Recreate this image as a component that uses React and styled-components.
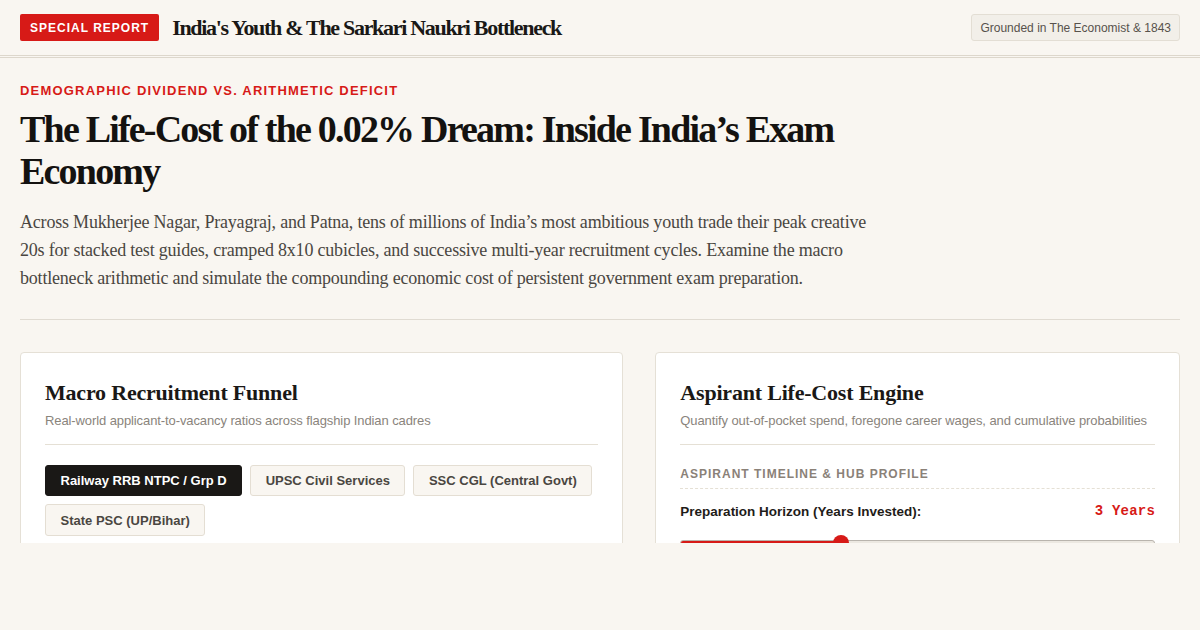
import React, { useState } from "react";
import styled, { createGlobalStyle } from "styled-components";

const GlobalStyle = createGlobalStyle`
  html, body { margin: 0; padding: 0; background: #f9f6f1; }
  * { box-sizing: border-box; }
`;

const serif = `"Liberation Serif", "Times New Roman", serif`;
const sans = `"Liberation Sans", Arial, sans-serif`;
const mono = `"Liberation Mono", "Courier New", monospace`;

const Page = styled.div`
  height: 543px;
  overflow: hidden;
  background: #f9f6f1;
  color: #1a1816;
  font-family: ${sans};
`;

const TopBar = styled.header`
  height: 58px;
  padding: 0 20px;
  display: flex;
  align-items: center;
  justify-content: space-between;
  border-bottom: 3px double #ddd7cc;
`;

const Brand = styled.div`
  display: flex;
  align-items: center;
  gap: 13px;
`;

const Badge = styled.span`
  background: #d71a17;
  color: #fff;
  font-family: ${sans};
  font-weight: 700;
  font-size: 12px;
  letter-spacing: 1px;
  padding: 0 10px;
  height: 27px;
  display: inline-flex;
  align-items: center;
  border-radius: 2px;
`;

const BarTitle = styled.div`
  font-family: ${serif};
  font-weight: 700;
  font-size: 22px;
  letter-spacing: -1.3px;
  color: #1a1816;
`;

const SourceChip = styled.span`
  font-size: 12px;
  color: #57524c;
  background: #f2efe9;
  border: 1px solid #e3ded4;
  border-radius: 3px;
  height: 27px;
  padding: 0 8px;
  display: inline-flex;
  align-items: center;
`;

const Main = styled.main`
  padding: 0 20px;
`;

const Hero = styled.section`
  padding-top: 25px;
  padding-bottom: 27px;
  border-bottom: 1px solid #e0dbd2;
`;

const Kicker = styled.div`
  color: #d71a17;
  font-weight: 700;
  font-size: 13px;
  letter-spacing: 1.2px;
  text-transform: uppercase;
`;

const Headline = styled.h1`
  margin: 10px 0 0;
  max-width: 900px;
  font-family: ${serif};
  font-weight: 700;
  font-size: 38px;
  line-height: 42px;
  letter-spacing: -1.8px;
  color: #141210;
`;

const Lede = styled.p`
  margin: 16px 0 0;
  max-width: 860px;
  font-family: ${serif};
  font-size: 18px;
  line-height: 28px;
  letter-spacing: -0.2px;
  color: #4a4641;
`;

const Grid = styled.div`
  margin-top: 32px;
  display: grid;
  grid-template-columns: 1.15fr 1fr;
  gap: 32px;
`;

const Card = styled.section`
  background: #fff;
  border: 1px solid #e5e0d6;
  border-radius: 4px;
  padding: 26px 24px 24px;
  min-height: 300px;
`;

const CardHead = styled.div`
  padding-bottom: 16px;
  border-bottom: 1px solid #e5e0d5;
`;

const CardTitle = styled.h2`
  margin: 0;
  font-family: ${serif};
  font-weight: 700;
  font-size: 22px;
  line-height: 28px;
  letter-spacing: -0.2px;
  color: #1a1816;
`;

const CardSub = styled.div`
  margin-top: 6px;
  font-size: 13px;
  letter-spacing: -0.1px;
  white-space: nowrap;
  color: #8a847c;
`;

const Tabs = styled.div`
  margin-top: 20px;
  display: flex;
  flex-wrap: wrap;
  gap: 8px;
`;

const Tab = styled.button`
  font-family: ${sans};
  font-weight: 700;
  font-size: 13px;
  padding: 0 14.5px;
  border-radius: 3px;
  cursor: pointer;
  border: 1px solid ${(p) => (p.$active ? "#1a1816" : "#e4ded3")};
  background: ${(p) => (p.$active ? "#1a1816" : "#f9f6f1")};
  color: ${(p) => (p.$active ? "#fff" : "#4a4641")};
  height: ${(p) => (p.$tall ? "32px" : "31px")};
`;

const SectionLabel = styled.div`
  margin-top: 22px;
  padding-bottom: 7px;
  border-bottom: 1px dashed #e5e0d5;
  font-size: 12px;
  font-weight: 700;
  letter-spacing: 1px;
  color: #8a8178;
  text-transform: uppercase;
`;

const FieldRow = styled.div`
  margin-top: 14px;
  display: flex;
  align-items: center;
  justify-content: space-between;
`;

const FieldLabel = styled.label`
  font-size: 13.5px;
  font-weight: 700;
  color: #1f1c19;
`;

const FieldValue = styled.span`
  font-family: ${mono};
  font-weight: 700;
  font-size: 14px;
  letter-spacing: 0.2px;
  color: #d71a17;
`;

const SliderWrap = styled.div`
  position: relative;
  margin-top: 16px;
  height: 16px;
`;

const Track = styled.div`
  position: absolute;
  left: 0;
  right: 0;
  top: 5px;
  height: 6px;
  border-radius: 3px;
  background: #ece8e1;
  border: 1px solid #b9b4ad;
  overflow: hidden;
`;

const Fill = styled.div`
  height: 100%;
  background: #d71a17;
`;

const Thumb = styled.div`
  position: absolute;
  top: 0;
  width: 16px;
  height: 16px;
  border-radius: 50%;
  background: #d71a17;
`;

const cadres = [
  "Railway RRB NTPC / Grp D",
  "UPSC Civil Services",
  "SSC CGL (Central Govt)",
  "State PSC (UP/Bihar)",
];

export default function App() {
  const [active, setActive] = useState(0);
  const years = 3;
  const ratio = (years - 1) / (7 - 1);
  // thumb travels inside the track, inset by its own radius on each side
  const thumbLeft = `calc(${ratio} * (100% - 16px))`;
  const fillWidth = `calc(${ratio} * (100% - 16px) + 8px)`;

  return (
    <Page>
      <GlobalStyle />
      <TopBar>
        <Brand>
          <Badge>SPECIAL REPORT</Badge>
          <BarTitle>India's Youth &amp; The Sarkari Naukri Bottleneck</BarTitle>
        </Brand>
        <SourceChip>Grounded in The Economist &amp; 1843</SourceChip>
      </TopBar>

      <Main>
        <Hero>
          <Kicker>Demographic Dividend vs. Arithmetic Deficit</Kicker>
          <Headline>
            The Life-Cost of the 0.02% Dream: Inside India’s Exam Economy
          </Headline>
          <Lede>
            Across Mukherjee Nagar, Prayagraj, and Patna, tens of millions of
            India’s most ambitious youth trade their peak creative 20s for
            stacked test guides, cramped 8x10 cubicles, and successive
            multi-year recruitment cycles. Examine the macro bottleneck
            arithmetic and simulate the compounding economic cost of persistent
            government exam preparation.
          </Lede>
        </Hero>

        <Grid>
          <Card>
            <CardHead>
              <CardTitle>Macro Recruitment Funnel</CardTitle>
              <CardSub>
                Real-world applicant-to-vacancy ratios across flagship Indian cadres
              </CardSub>
            </CardHead>
            <Tabs>
              {cadres.map((c, i) => (
                <Tab
                  key={c}
                  $active={i === active}
                  $tall={i === 3}
                  onClick={() => setActive(i)}
                >
                  {c}
                </Tab>
              ))}
            </Tabs>
          </Card>

          <Card>
            <CardHead>
              <CardTitle>Aspirant Life-Cost Engine</CardTitle>
              <CardSub>
                Quantify out-of-pocket spend, foregone career wages, and cumulative probabilities
              </CardSub>
            </CardHead>
            <SectionLabel>Aspirant Timeline &amp; Hub Profile</SectionLabel>
            <FieldRow>
              <FieldLabel>Preparation Horizon (Years Invested):</FieldLabel>
              <FieldValue>{years} Years</FieldValue>
            </FieldRow>
            <SliderWrap>
              <Track>
                <Fill style={{ width: fillWidth }} />
              </Track>
              <Thumb style={{ left: thumbLeft }} />
            </SliderWrap>
          </Card>
        </Grid>
      </Main>
    </Page>
  );
}
